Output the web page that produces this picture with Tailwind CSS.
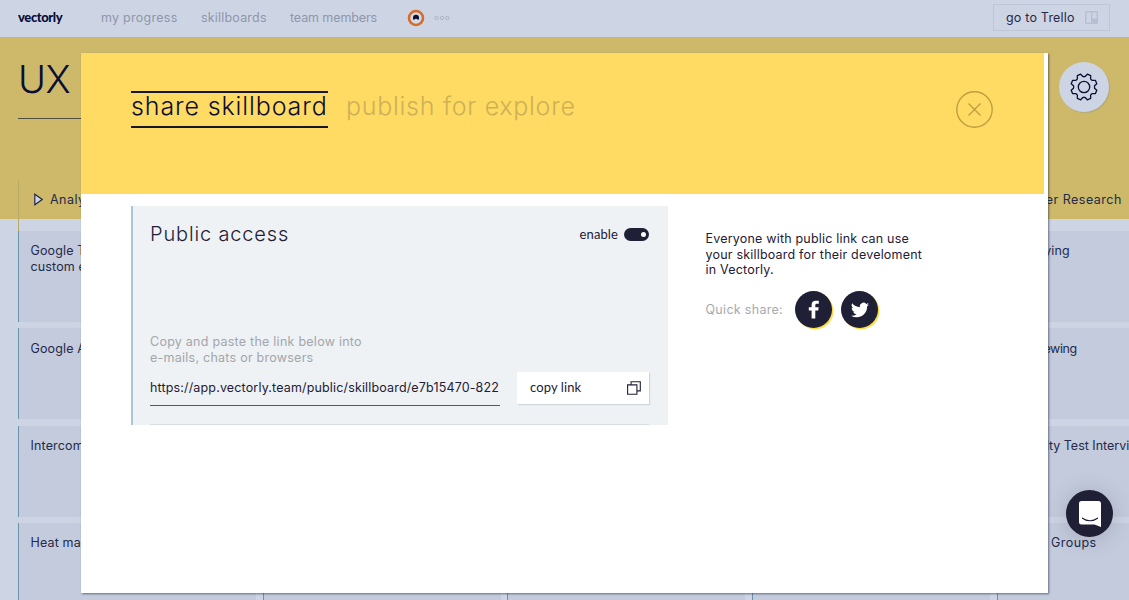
<!DOCTYPE html>
<html lang="en">

<head>
    <meta charset="UTF-8">
    <meta name="viewport" content="width=device-width, initial-scale=1.0">
    <title>Vectorly - Share skillboard</title>
    <script src="https://cdn.jsdelivr.net/npm/@tailwindcss/browser@4"></script>
</head>

<body class="relative h-[600px] overflow-hidden bg-[#cdd5e5] font-['Inter',sans-serif] text-[12.5px] text-[#242a4a]">

    <!-- Top bar -->
    <header class="flex h-[38px] items-center border-b border-[#b5b49c] pl-[18px] pr-[19px] pb-[2px]">
        <div class="w-[83px] font-['Lato',sans-serif] text-[13px] font-black tracking-[-0.4px] text-[#080e35]">vectorly</div>
        <nav class="flex items-center pt-[2px] text-[#8f96aa]">
            <a class="w-[100px] tracking-[0.27px]">my progress</a>
            <a class="w-[89px] tracking-[0.19px]">skillboards</a>
            <a class="w-[117px] tracking-[-0.1px]">team members</a>
        </nav>
        <svg class="h-[18px] w-[18px]" viewBox="0 0 18 18">
            <circle cx="9" cy="9" r="7" fill="#d5dae7" stroke="#d46c2b" stroke-width="2.6" />
            <path d="M6 10.600V8.700a3 3 0 0 1 6 0v1.900h-1.700a1.400 1.400 0 0 0-2.600 0z" fill="#0b1035" />
        </svg>
        <svg class="ml-[9px] h-[6px] w-[16px]" viewBox="0 0 16 6" fill="none" stroke="#adb4c5">
            <circle cx="2.5" cy="3" r="1.7" />
            <circle cx="8" cy="3" r="1.7" />
            <circle cx="13.3" cy="3" r="1.7" />
        </svg>
        <button class="ml-auto flex h-[27px] w-[117px] items-center border border-[#bfc6d7] pl-[12px] tracking-[0.2px]">
            <span class="w-[79px] pt-[2px] text-left">go to Trello</span>
            <svg class="h-[13px] w-[13px]" viewBox="0 0 13 13">
                <rect width="13" height="13" rx="1.5" fill="#b7bfd0" />
                <path d="M1.500 1.500h4.500v10H1.500zM7.300 1.500h4.200v6H7.300z" fill="#cdd5e5" />
            </svg>
        </button>
    </header>

    <!-- Board title -->
    <section class="flex h-[142px] items-start justify-between bg-[#cdb969] pl-[18px] pr-[20px]">
        <h1 class="h-[81px] w-[238px] border-b border-[#4e503f] pt-[18px] text-[38px] leading-[46px] font-light tracking-[-0.5px] text-[#080e35]">UX</h1>
        <button class="mt-[24px] flex h-[50px] w-[50px] items-center justify-center rounded-full bg-[#cdd5e5] shadow-[1px_1px_1px_#b2a77a]">
            <svg class="h-[28px] w-[28px]" viewBox="0 0 28 28" fill="none" stroke="#0b1035" stroke-width="1.3" stroke-linejoin="round">
                <circle cx="14" cy="14" r="5.7" />
                <path id="gear" />
            </svg>
        </button>
    </section>

    <!-- Skill columns, filled by the script -->
    <main class="relative overflow-hidden">
        <div class="absolute inset-x-0 top-0 h-[39px] bg-[#cdb969]"></div>
        <div id="board" class="relative flex gap-[6.7px] pl-[18px]"></div>
    </main>

    <!-- Share dialog -->
    <div class="absolute top-[52.5px] left-[81px] h-[540.5px] w-[967px] bg-white pr-[4px] shadow-[0.5px_0.5px_2px_rgba(40,45,75,0.6)]">
        <div class="flex h-[141px] justify-between bg-[#ffdb63] pl-[50px] pr-[51px]">
            <div class="flex pt-[38.5px] text-[25px] font-light">
                <h2 class="h-[37px] w-[197px] border-y-2 border-[#15172f] leading-[27px] tracking-[0.88px] whitespace-nowrap text-[#0c0f2c]">share skillboard</h2>
                <h2 class="ml-[18px] pt-[2px] leading-[27px] tracking-[0.72px] whitespace-nowrap text-[#cdb155]">publish for explore</h2>
            </div>
            <svg class="mt-[38.5px] h-[37px] w-[37px]" viewBox="0 0 37 37" fill="none" stroke="#bd9f42" stroke-width="1.4">
                <circle cx="18.5" cy="18.5" r="17.7" />
                <path d="M12.500 12.500l12 12M24.500 12.500l-12 12" />
            </svg>
        </div>

        <div class="flex pt-[12.5px] pl-[50px]">
            <div class="h-[219px] w-[537px] border-l-2 border-[#adc5d3] bg-[#eef2f5] pl-[17px] pr-[19px] text-[#1f2036]">
                <div class="flex items-center justify-between pt-[14px]">
                    <h3 class="text-[20px] leading-[28px] font-light tracking-[0.85px]">Public access</h3>
                    <div class="flex items-center gap-[6px] font-['Lato',sans-serif] text-[13px] tracking-[0.1px]">
                        <span class="pt-[2px]">enable</span>
                        <span class="flex h-[13px] w-[25px] items-center justify-end rounded-full bg-[#1f2036] pr-[3px]">
                            <span class="h-[5px] w-[5px] rounded-full bg-white"></span>
                        </span>
                    </div>
                </div>
                <p class="mt-[86px] h-[32px] leading-4 whitespace-nowrap tracking-[0.25px] text-[#a3a6ab]">Copy and paste the link below into<br>e-mails, chats or browsers</p>
                <div class="mt-[6px] flex justify-between border-b border-[#d8dde1] pb-[18px]">
                    <div class="h-[34px] w-[350px] overflow-hidden border-b border-[#55586a] leading-[32px] whitespace-nowrap tracking-[0.155px]">https://app.vectorly.team/public/skillboard/e7b15470-822</div>
                    <button class="flex h-[32px] w-[132px] items-center justify-between bg-white pl-[13px] pr-[8px] font-['Lato',sans-serif] text-[13px] tracking-[0.1px] shadow-[1px_1px_1px_#cfd4da]">
                        copy link
                        <svg class="h-[14px] w-[14px]" viewBox="0 0 14 14" fill="none" stroke="#1f2036" stroke-width="1.1">
                            <path d="M.6 3.900h9.300v9.300H.6zM4.100 3.700V.7h9.200v9.200H10.200" />
                        </svg>
                    </button>
                </div>
            </div>

            <div class="ml-[37.5px] pt-[25px]">
                <p class="leading-[15.7px] tracking-[0.2px] whitespace-nowrap text-[#1f2036]">Everyone with public link can use<br>your skillboard for their develoment<br>in Vectorly.</p>
                <div class="mt-[13px] flex items-center">
                    <span class="w-[89.5px] pt-[1px] tracking-[0.3px] text-[#a8a9af]">Quick share:</span>
                    <a class="flex h-[37px] w-[37px] items-center justify-center rounded-full bg-[#1f2036] shadow-[1.5px_1.5px_0_#ffdb47]">
                        <svg class="h-[19px] w-[12px]" viewBox="0 0 12 19" fill="#fff">
                            <path d="M3.600 18.500V10.600H.8V7.300h2.800V5C3.600 2.200 5.200.8 7.800.8h3v3H9C7.700 3.800 7.300 4.400 7.300 5.400v1.900h3.400l-.5 3.300H7.300v7.900z" />
                        </svg>
                    </a>
                    <a class="ml-[9px] flex h-[37px] w-[37px] items-center justify-center rounded-full bg-[#1f2036] shadow-[1.5px_1.5px_0_#ffdb47]">
                        <svg class="h-[18px] w-[18px]" viewBox="0 0 24 24" fill="#fff">
                            <path d="M24 4.600a10 10 0 0 1-2.800.8 5 5 0 0 0 2.200-2.700 10 10 0 0 1-3.100 1.200 4.900 4.900 0 0 0-8.400 4.500A14 14 0 0 1 1.700 3.100a4.900 4.900 0 0 0 1.500 6.600 5 5 0 0 1-2.200-.6v.1a4.900 4.900 0 0 0 3.900 4.800 5 5 0 0 1-2.200.1 4.900 4.900 0 0 0 4.600 3.400A9.900 9.900 0 0 1 0 19.500a14 14 0 0 0 7.500 2.200c9.100 0 14-7.500 14-14v-.6A10 10 0 0 0 24 4.600z" />
                        </svg>
                    </a>
                </div>
            </div>
        </div>
    </div>

    <!-- Chat launcher -->
    <button class="absolute top-[490px] left-[1066px] flex h-[47px] w-[47px] items-center justify-center rounded-full bg-[#1f2036] shadow-[0_2px_24px_rgba(0,0,0,0.16)]">
        <svg class="h-[26px] w-[24px]" viewBox="0 0 24 26">
            <path d="M3.500 0h17A2.500 2.500 0 0 1 23 2.500V26l-6.500-2.500h-13A2.500 2.500 0 0 1 1 21V2.500A2.500 2.500 0 0 1 3.500 0z" fill="#fff" />
            <path d="M4.500 17.200c4.500 3.400 10.500 3.400 15 0" fill="none" stroke="#1f2036" stroke-width="1.2" stroke-linecap="round" />
        </svg>
    </button>

    <script>
        const columns = [
            { title: "Analytics", spacing: "tracking-[0.15px]", skills: ["Google Tag Manager<br>custom events", "Google Analytics", "Intercom", "Heat maps"] },
            { title: "", spacing: "", skills: ["", "", "", ""] },
            { title: "", spacing: "", skills: ["", "", "", ""] },
            { title: "", spacing: "", skills: ["", "", "", ""] },
            {
                title: "User Research", spacing: "tracking-[0.15px]",
                skills: ["Surveying", "<span class='tracking-[-0.4px]'>Interviewing</span>", "<span class='tracking-[0px]'>Usability Test Interviews</span>", "<span class='tracking-[0.45px]'>Focus Groups</span>"]
            },
        ];

        document.getElementById("board").innerHTML = columns.map(col => `
            <div class="w-[238px] shrink-0">
                <div class="flex h-[51px] items-center gap-[7px] border-l border-[#b8a968] pb-[12px] pl-[15px] tracking-[0.5px]">
                    <svg class="h-[13px] w-[9px]" viewBox="0 0 9 13"><path d="M.8 1.200v10.600L8.200 6.500z" fill="#cdd5e5" stroke="#242a4a" stroke-width="1.2" /></svg>
                    <span class="pt-[1px]">${col.title}</span>
                </div>
                <div class="flex flex-col gap-[6.3px]">
                    ${col.skills.map(s => `<div class="h-[91px] border-l border-[#6a93b0] bg-[#c3cbdd] pt-[12.3px] pl-[11.5px] leading-4 whitespace-nowrap ${col.spacing}">${s}</div>`).join("")}
                </div>
            </div>`).join("");

        // Eight-toothed gear outline
        let d = "";
        for (let i = 0; i < 8; i++) {
            [[-16, 10.6], [-8, 13.2], [8, 13.2], [16, 10.6]].forEach(([a, r], k) => {
                const t = (i * 45 + 22.5 + a) * Math.PI / 180;
                const p = `${(14 + r * Math.cos(t)).toFixed(2)} ${(14 + r * Math.sin(t)).toFixed(2)}`;
                d += (i + k === 0 ? "M" : k === 0 ? "A3 3 0 0 0 " : "L") + p;
            });
        }
        document.getElementById("gear").setAttribute("d", d + "Z");
    </script>
</body>

</html>
